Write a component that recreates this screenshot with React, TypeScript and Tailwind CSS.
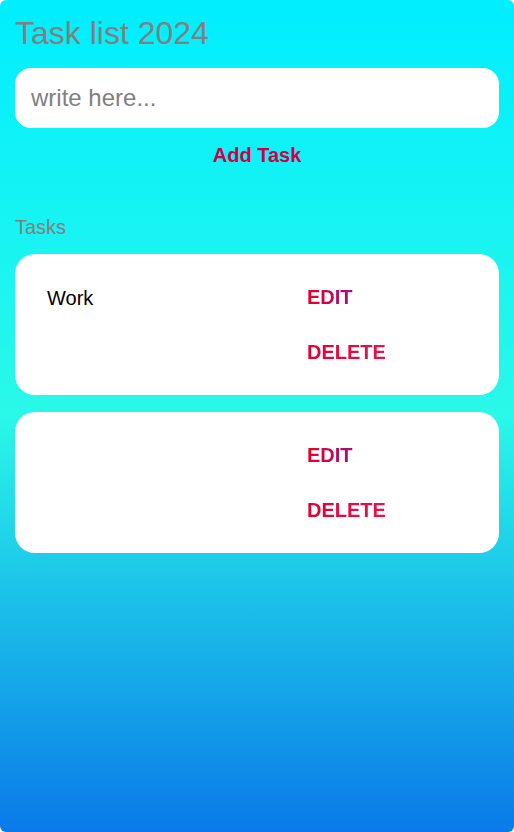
import React from "react";

const tasks = ["Work", ""];

export default function App() {
  return (
    <div className="bg-white">
      <div
        className="h-[832px] w-[514px] rounded-[6px] bg-[linear-gradient(180deg,#00eeff_0%,#2af8e8_50%,#0a7ae8_100%)] px-[15px] pt-[14px]"
        style={{ fontFamily: '"Liberation Sans", Arial, sans-serif' }}
      >
        <h1 className="text-[32px] leading-[38px] text-[#808080]">Task list 2024</h1>
        <input
          placeholder="write here..."
          className="mt-[16px] block h-[60px] w-full rounded-[16px] bg-white px-[16px] text-[24px] text-black outline-none placeholder:text-[#808080]"
        />
        <div className="mt-[15px] flex justify-center">
          <button className="text-[20px] font-bold leading-[24px] text-[#cc0048]">Add Task</button>
        </div>
        <div className="mt-[48px] text-[20px] leading-[24px] text-[#808080]">Tasks</div>
        <div className="mt-[15px] flex flex-col gap-[17px]">
          {tasks.map((t, i) => (
            <div key={i} className="flex h-[141px] rounded-[20px] bg-white pl-[32px] py-[31px]">
              <div className="w-[260px] pt-[1px] text-[20px] leading-[24px] text-black">{t}</div>
              <div className="flex flex-col items-start gap-[31px]">
                <button className="bg-[linear-gradient(90deg,#e8002c_0%,#a0107a_100%)] bg-clip-text text-[20px] font-bold leading-[24px] text-transparent">
                  EDIT
                </button>
                <button className="bg-[linear-gradient(90deg,#e00034_0%,#e8144a_100%)] bg-clip-text text-[20px] font-bold leading-[24px] text-transparent">
                  DELETE
                </button>
              </div>
            </div>
          ))}
        </div>
      </div>
    </div>
  );
}
